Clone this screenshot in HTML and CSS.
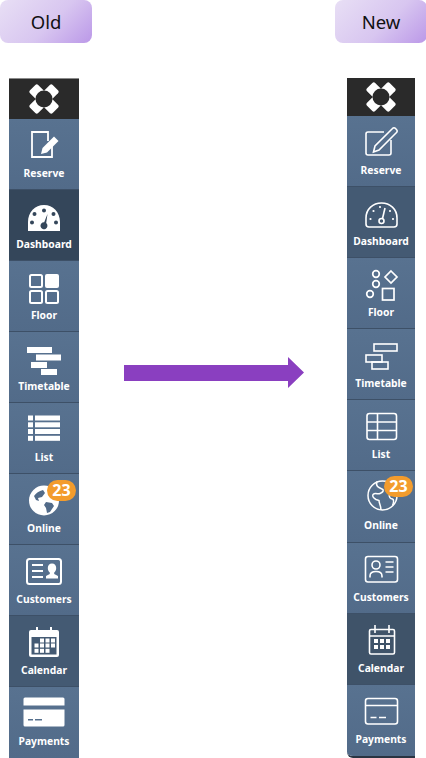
FILE: index.html
```html
<!DOCTYPE html>
<html lang="en">
<head>
  <meta charset="UTF-8">
  <meta name="viewport" content="width=device-width, initial-scale=1.0">
  <title>Sidebar icons: old and new</title>
  <link rel="stylesheet" href="styles.css">
</head>
<body>
  <div class="compare">
    <!-- Old, filled icons -->
    <section class="column column-old">
      <div class="tag">Old</div>
      <nav class="sidebar">
        <div class="logo">
          <svg width="30" height="30" viewBox="0 0 30 30">
            <g fill="#fff">
              <rect x="2" y="2" width="11.500" height="11.500" rx="2" transform="rotate(45 7.750 7.750)"/>
              <rect x="16.500" y="2" width="11.500" height="11.500" rx="2" transform="rotate(45 22.250 7.750)"/>
              <rect x="2" y="16.500" width="11.500" height="11.500" rx="2" transform="rotate(45 7.750 22.250)"/>
              <rect x="16.500" y="16.500" width="11.500" height="11.500" rx="2" transform="rotate(45 22.250 22.250)"/>
            </g>
            <circle cx="15" cy="15" r="8.500" fill="#2a2a2a"/>
          </svg>
        </div>
        <a class="item">
          <svg class="icon" viewBox="0 0 36 36">
            <path class="line" d="M22 15V6H6v25h20V20" stroke-width="1.8" fill="none"/>
            <path class="solid" d="M15 28l1.5-6L28 10.500l4.500 4.500L21 26.500z"/>
          </svg>
          <span class="label">Reserve</span>
        </a>
        <a class="item item-dark">
          <svg class="icon" viewBox="0 0 36 36">
            <path class="solid" fill-rule="evenodd" d="M2 34v-9C2 15 9 8 18 8s16 7 16 17v9zM18 11.500a2 2 0 1 0 0 4 2 2 0 0 0 0-4zM8.500 15a2 2 0 1 0 0 4 2 2 0 0 0 0-4zM27.500 15a2 2 0 1 0 0 4 2 2 0 0 0 0-4zM6 23.500a2 2 0 1 0 0 4 2 2 0 0 0 0-4zM30 23.500a2 2 0 1 0 0 4 2 2 0 0 0 0-4zM21.500 17l-3.300 8.200a3.500 3.500 0 1 0 2 .8z"/>
          </svg>
          <span class="label">Dashboard</span>
        </a>
        <a class="item">
          <svg class="icon" viewBox="0 0 36 36">
            <g class="line" stroke-width="2" fill="none">
              <rect x="4" y="7" width="12" height="12" rx="1.500"/>
              <rect x="4" y="23" width="12" height="12" rx="1.500"/>
              <rect x="20" y="23" width="12" height="12" rx="1.500"/>
            </g>
            <rect class="solid" x="19" y="6" width="14" height="14" rx="2"/>
          </svg>
          <span class="label">Floor</span>
        </a>
        <a class="item">
          <svg class="icon" viewBox="0 0 36 36">
            <g class="solid">
              <rect x="1" y="8" width="25" height="6"/>
              <rect x="10" y="15.500" width="25" height="6"/>
              <rect x="5" y="23" width="16" height="6"/>
              <rect x="15" y="30" width="16" height="6"/>
            </g>
          </svg>
          <span class="label">Timetable</span>
        </a>
        <a class="item">
          <svg class="icon" viewBox="0 0 36 36">
            <g class="solid">
              <rect x="2" y="5.500" width="5" height="5"/>
              <rect x="9" y="5.500" width="25" height="5"/>
              <rect x="2" y="12.300" width="5" height="5"/>
              <rect x="9" y="12.300" width="25" height="5"/>
              <rect x="2" y="19" width="5" height="5"/>
              <rect x="9" y="19" width="25" height="5"/>
              <rect x="2" y="25.800" width="5" height="5"/>
              <rect x="9" y="25.800" width="25" height="5"/>
            </g>
          </svg>
          <span class="label">List</span>
        </a>
        <a class="item">
          <svg class="icon" viewBox="0 0 36 36">
            <circle class="solid" cx="18" cy="19.500" r="15"/>
            <path class="cut" d="M8 15c2-3 5-5 9-6l2 3-3 4-4 1 1 3-3-1zM20 21l6 1 2 3-4 6-3 1-1-5-2-3z"/>
          </svg>
          <span class="label">Online</span>
          <span class="count">23</span>
        </a>
        <a class="item">
          <svg class="icon" viewBox="0 0 36 36">
            <rect class="line" x="1" y="7" width="34" height="25" rx="2.500" stroke-width="2" fill="none"/>
            <path class="line" d="M6 13h11M6 19h11M6 25h11" stroke-width="1.800"/>
            <path class="solid" d="M26 11.500c2.600 0 4.200 2 4.200 4.500 0 2-.9 3.600-2 4.500v1.500l3.800 2v2.500H20v-2.500l3.800-2v-1.500c-1.100-.9-2-2.500-2-4.500 0-2.500 1.600-4.500 4.200-4.500z"/>
          </svg>
          <span class="label">Customers</span>
        </a>
        <a class="item item-mid">
          <svg class="icon" viewBox="0 0 36 36">
            <path class="solid" fill-rule="evenodd" d="M5 7h5V4h2v3h12V4h2v3h5a2 2 0 0 1 2 2v23a2 2 0 0 1-2 2H5a2 2 0 0 1-2-2V9a2 2 0 0 1 2-2zM5.500 14v17.500h25V14z"/>
            <g class="solid">
              <rect x="14" y="15.500" width="4" height="4"/><rect x="19.500" y="15.500" width="4" height="4"/><rect x="25" y="15.500" width="4" height="4"/>
              <rect x="8.500" y="20.500" width="4" height="4"/><rect x="14" y="20.500" width="4" height="4"/><rect x="19.500" y="20.500" width="4" height="4"/><rect x="25" y="20.500" width="4" height="4"/>
              <rect x="8.500" y="25.800" width="4" height="4"/><rect x="14" y="25.800" width="4" height="4"/><rect x="19.500" y="25.800" width="4" height="4"/>
            </g>
          </svg>
          <span class="label">Calendar</span>
        </a>
        <a class="item">
          <svg class="icon icon-wide" viewBox="0 0 42 36">
            <path class="solid" d="M2 3.500h38A1.500 1.500 0 0 1 41.500 5v6.500H.5V5A1.500 1.500 0 0 1 2 3.500z"/>
            <path class="solid" fill-rule="evenodd" d="M.5 15.500h41V31a1.500 1.500 0 0 1-1.500 1.500H2A1.500 1.500 0 0 1 .5 31zM5 25v1.600h5V25zM12 25v1.600h7V25z"/>
          </svg>
          <span class="label">Payments</span>
        </a>
      </nav>
    </section>

    <div class="arrow"></div>

    <!-- New, outline icons -->
    <section class="column column-new">
      <div class="tag">New</div>
      <nav class="sidebar">
        <div class="logo">
          <svg width="30" height="30" viewBox="0 0 30 30">
            <g fill="#fff">
              <rect x="2" y="2" width="11.500" height="11.500" rx="2" transform="rotate(45 7.750 7.750)"/>
              <rect x="16.500" y="2" width="11.500" height="11.500" rx="2" transform="rotate(45 22.250 7.750)"/>
              <rect x="2" y="16.500" width="11.500" height="11.500" rx="2" transform="rotate(45 7.750 22.250)"/>
              <rect x="16.500" y="16.500" width="11.500" height="11.500" rx="2" transform="rotate(45 22.250 22.250)"/>
            </g>
            <circle cx="15" cy="15" r="8.500" fill="#2a2a2a"/>
          </svg>
        </div>
        <a class="item">
          <svg class="icon" viewBox="0 0 36 36">
            <g class="line" stroke-width="1.600" fill="none">
              <path d="M21 9H5a2 2 0 0 0-2 2v19a2 2 0 0 0 2 2h21a2 2 0 0 0 2-2V17"/>
              <path d="M10.500 29l1.500-6L29.500 5.500a2 2 0 0 1 3 0l1 1a2 2 0 0 1 0 3L16 27z"/>
            </g>
          </svg>
          <span class="label">Reserve</span>
        </a>
        <a class="item item-mid">
          <svg class="icon" viewBox="0 0 36 36">
            <g class="line" stroke-width="1.600" fill="none">
              <path d="M6 33c-2 0-3-1-3-3v-6C3 15 10 9 18.500 9S34 15 34 24v6c0 2-1 3-3 3z"/>
              <circle cx="18.500" cy="27" r="2.500"/>
              <path d="M19.500 24.500L22 14"/>
            </g>
            <g class="solid">
              <circle cx="17" cy="13" r="1.100"/><circle cx="10.500" cy="17" r="1.100"/><circle cx="27" cy="17" r="1.100"/><circle cx="7.500" cy="25" r="1.100"/><circle cx="30" cy="25" r="1.100"/>
            </g>
          </svg>
          <span class="label">Dashboard</span>
        </a>
        <a class="item">
          <svg class="icon" viewBox="0 0 36 36">
            <g class="line" stroke-width="1.700" fill="none">
              <circle cx="13" cy="9" r="3.300"/>
              <circle cx="13" cy="19" r="3.300"/>
              <circle cx="7" cy="29" r="3.300"/>
              <path d="M28 6l6 6-6 6-6-6z"/>
              <rect x="19.500" y="23.500" width="11.500" height="11.500"/>
            </g>
          </svg>
          <span class="label">Floor</span>
        </a>
        <a class="item">
          <svg class="icon" viewBox="0 0 36 36">
            <g class="line" stroke-width="1.600" fill="none">
              <rect x="11" y="8" width="23" height="7"/>
              <rect x="3" y="19" width="16" height="7"/>
              <rect x="9" y="26" width="16" height="7"/>
            </g>
          </svg>
          <span class="label">Timetable</span>
        </a>
        <a class="item">
          <svg class="icon" viewBox="0 0 36 36">
            <g class="line" stroke-width="1.600" fill="none">
              <rect x="4" y="6.500" width="29.500" height="26" rx="2.500"/>
              <path d="M4 15h29.500M4 23.500h29.500M14.500 6.500v26"/>
            </g>
          </svg>
          <span class="label">List</span>
        </a>
        <a class="item">
          <svg class="icon" viewBox="0 0 36 36">
            <g class="line" stroke-width="1.500" fill="none">
              <circle cx="19.500" cy="17.500" r="14.500"/>
              <path d="M14 3.500c-1 3 0 5 2 6l4 2c1 2-1 3-3 4-2 1-5-1-7 1-1 2 1 4 3 5l3 1c0 3 2 5 2 9.500"/>
              <path d="M33.500 14c-3-1-6 0-7 2-1 3 1 5 3 5 2 1 1 4 0 6.500"/>
            </g>
          </svg>
          <span class="label">Online</span>
          <span class="count">23</span>
        </a>
        <a class="item">
          <svg class="icon" viewBox="0 0 36 36">
            <g class="line" stroke-width="1.600" fill="none">
              <rect x="2.500" y="6.500" width="32" height="25.500" rx="2.500"/>
              <circle cx="13" cy="15" r="4"/>
              <path d="M7 27.500v-1.500c0-3 2.500-4.500 6-4.500s6 1.500 6 4.500v1.500M22.500 12h8M22.500 17h8M22.500 22h8"/>
            </g>
          </svg>
          <span class="label">Customers</span>
        </a>
        <a class="item item-dark">
          <svg class="icon" viewBox="0 0 36 36">
            <g class="line" stroke-width="1.600" fill="none">
              <rect x="6.500" y="8.500" width="25" height="24.500" rx="1.500"/>
              <path d="M6.500 15h25M12 4v8M26 4v8"/>
            </g>
            <g class="solid">
              <rect x="11" y="18" width="4" height="4"/><rect x="17" y="18" width="4" height="4"/><rect x="23" y="18" width="4" height="4"/>
              <rect x="11" y="24" width="4" height="4"/><rect x="17" y="24" width="4" height="4"/><rect x="23" y="24" width="4" height="4"/>
            </g>
          </svg>
          <span class="label">Calendar</span>
        </a>
        <a class="item">
          <svg class="icon" viewBox="0 0 36 36">
            <g class="line" stroke-width="1.600" fill="none">
              <rect x="2.500" y="6.500" width="32" height="25.500" rx="2.500"/>
              <path d="M2.500 13.500h32M7.500 25.500h6M16 25.500h7"/>
            </g>
          </svg>
          <span class="label">Payments</span>
        </a>
      </nav>
    </section>
  </div>
</body>
</html>
```

FILE: styles.css
```css
html, body {
  margin: 0;
  height: 758px;
  overflow: hidden;
  background-color: #fff;
}
.compare {
  display: grid;
  grid-template-columns: 92px 243px 92px;
  font-family: "Noto Sans", sans-serif;
}
.tag {
  width: 92px;
  height: 43px;
  border-radius: 8px;
  background: linear-gradient(135deg, #e8dff5, #d8c6f0 55%, #bb98e8);
  color: #111;
  font-size: 18.500px;
  line-height: 44px;
  text-align: center;
}
.sidebar {
  margin-top: 35px;
  color: #fff;
  overflow: hidden;
}
.column-old .sidebar {
  width: 70px;
  margin-left: 9px;
}
.column-new .sidebar {
  width: 68px;
  margin-left: 12px;
  border-bottom: 2px solid #2a3442;
  border-radius: 0 0 0 6px;
}
.logo {
  height: 41px;
  background-color: #2a2a2a;
  border-top: 1px solid #8a8a8a;
  box-sizing: border-box;
  display: flex;
  align-items: center;
  justify-content: center;
}
.column-new .logo {
  height: 38px;
  border-top: 0;
}
.item {
  position: relative;
  box-sizing: border-box;
  height: 71px;
  padding-top: 7px;
  display: flex;
  flex-direction: column;
  align-items: center;
  gap: 4px;
  background: linear-gradient(#587290, #526b89);
  border-bottom: 1px solid #3d5067;
}
.column-new .item {
  height: 71.100px;
}
.item:last-child {
  border-bottom: 0;
}
.item-dark {
  background: #34465a;
}
.column-new .item-dark {
  background: #3f5369;
}
.item-mid {
  background: #445a73;
}
.icon {
  width: 36px;
  height: 36px;
  flex: none;
}
.icon-wide {
  width: 42px;
}
.solid {
  fill: #fff;
}
.line {
  stroke: #fff;
}
.cut {
  fill: #526b89;
}
.label {
  font-size: 10.300px;
  font-weight: 700;
  line-height: 14px;
}
.count {
  position: absolute;
  top: 6px;
  left: 38px;
  width: 29px;
  height: 21px;
  border-radius: 11px;
  background-color: #f39c2d;
  font-size: 16px;
  font-weight: 700;
  line-height: 21px;
  text-align: center;
}
.column-new .count {
  top: 5px;
  left: 37px;
}
.arrow {
  width: 180px;
  height: 31px;
  margin: 357px 0 0 32px;
  background-color: #8a3fc0;
  clip-path: polygon(0 8px, 164px 8px, 164px 0, 180px 15.500px, 164px 31px, 164px 24px, 0 24px);
}
```
